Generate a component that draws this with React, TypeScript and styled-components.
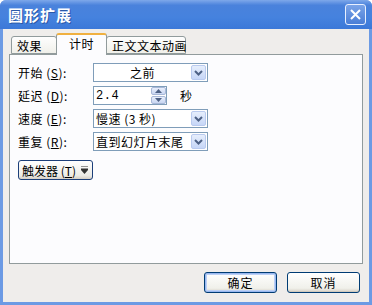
import styled, { createGlobalStyle } from "styled-components";

const Global = createGlobalStyle`
  html, body { margin: 0; padding: 0; background: #fff; }
  body { font-family: "Noto Sans CJK SC", "Liberation Sans", sans-serif; font-size: 12px; color: #000; }
`;

const Window = styled.div`
  width: 372px;
  height: 305px;
  box-sizing: border-box;
  display: flex;
  flex-direction: column;
  background: #6c9ae4;
  padding: 0 3px 3px 3px;
  border-radius: 6px 6px 0 0;
`;

const TitleBar = styled.div`
  height: 29px;
  margin: 0 -3px;
  padding: 0 6px 0 8px;
  display: flex;
  align-items: center;
  justify-content: space-between;
  border-radius: 6px 6px 0 0;
  background: linear-gradient(#7ea8ea 0%, #4a82dc 18%, #4582de 60%, #3b78d8 100%);
`;

const Title = styled.span`
  color: #fff;
  font-weight: bold;
  font-size: 15px;
  letter-spacing: 1px;
  text-shadow: 1px 1px 0 #2a58a8;
`;

const CloseButton = styled.div`
  width: 19px;
  height: 19px;
  border: 1px solid #e8f0ff;
  border-radius: 3px;
  background: linear-gradient(#7ba4e8, #4a7ed6);
  display: flex;
  align-items: center;
  justify-content: center;
`;

const Body = styled.div`
  flex: 1;
  background: #efedeb;
  padding: 4px 6px 0 6px;
  display: flex;
  flex-direction: column;
`;

const TabStrip = styled.div`
  display: flex;
  align-items: flex-end;
  height: 21px;
  padding-left: 2px;
  position: relative;
  z-index: 1;
`;

const Tab = styled.div<{ $active?: boolean; $w: number }>`
  width: ${(p) => p.$w}px;
  box-sizing: border-box;
  height: ${(p) => (p.$active ? 22 : 18)}px;
  margin-bottom: ${(p) => (p.$active ? -1 : 0)}px;
  border: 1px solid #919b9c;
  border-bottom: ${(p) => (p.$active ? "none" : "1px solid #919b9c")};
  border-top: ${(p) => (p.$active ? "2px solid #f0b040" : "1px solid #919b9c")};
  border-radius: 3px 3px 0 0;
  background: ${(p) => (p.$active ? "#fcfcfe" : "linear-gradient(#fefefe, #f0f0ea)")};
  display: flex;
  align-items: center;
  justify-content: ${(p) => (p.$active ? "center" : "flex-start")};
  padding: ${(p) => (p.$active ? "0 0 3px 0" : "0 0 0 5px")};
  font-size: 12px;
  letter-spacing: 0.5px;
  white-space: nowrap;
  & + & { margin-left: -1px; }
`;

const Panel = styled.div`
  height: 210px;
  box-sizing: border-box;
  border: 1px solid #919b9c;
  background: #fcfcfe;
  padding: 8px 8px 0 8px;
  display: flex;
  flex-direction: column;
  gap: 4px;
`;

const Row = styled.div`
  display: flex;
  align-items: center;
  height: 19px;
`;

const Label = styled.div`
  width: 75px;
  font-size: 12px;
  letter-spacing: 0.5px;
  white-space: pre;
  u { text-decoration: underline; }
`;

const Field = styled.div<{ $w: number }>`
  width: ${(p) => p.$w}px;
  height: 19px;
  box-sizing: border-box;
  border: 1px solid #7f9db9;
  background: #fff;
  display: flex;
  align-items: center;
`;

const FieldText = styled.div<{ $center?: boolean; $mono?: boolean }>`
  flex: 1;
  padding-left: ${(p) => (p.$center ? 0 : 2)}px;
  text-align: ${(p) => (p.$center ? "center" : "left")};
  font-family: ${(p) => (p.$mono ? '"Liberation Mono", "Noto Sans CJK SC", monospace' : 'inherit')};
  font-size: 12px;
  letter-spacing: 0.5px;
  white-space: pre;
  overflow: hidden;
`;

const DropButton = styled.div`
  width: 15px;
  height: 15px;
  margin-right: 1px;
  border: 1px solid #b9caef;
  border-radius: 2px;
  box-sizing: border-box;
  background: linear-gradient(#e6eefc, #c6d6f7);
  display: flex;
  align-items: center;
  justify-content: center;
`;

const Spinner = styled.div`
  width: 15px;
  height: 17px;
  display: flex;
  flex-direction: column;
  gap: 1px;
`;

const SpinHalf = styled.div`
  flex: 1;
  border: 1px solid #a8b8d8;
  border-radius: 2px;
  background: linear-gradient(#e9effc, #c8d6f2);
  display: flex;
  align-items: center;
  justify-content: center;
`;

const Unit = styled.span`
  margin-left: 13px;
  font-size: 12px;
`;

const TriggerButton = styled.div`
  margin-top: 5px;
  width: 75px;
  height: 20px;
  box-sizing: border-box;
  border: 1px solid #1c3f7a;
  border-radius: 3px;
  background: linear-gradient(#ffffff, #ecebe6 80%, #d6d0c5);
  display: flex;
  align-items: center;
  padding-left: 3px;
  gap: 5px;
  font-size: 12px;
  white-space: pre;
`;

const Footer = styled.div`
  display: flex;
  justify-content: flex-end;
  gap: 10px;
  padding: 8px 3px 0 0;
`;

const Button = styled.div<{ $default?: boolean }>`
  width: 73px;
  height: 21px;
  box-sizing: border-box;
  border: 1px solid #003c74;
  border-radius: 3px;
  background: linear-gradient(#ffffff, #f0f0ea 80%, #d6d0c5);
  box-shadow: ${(p) => (p.$default ? "inset 0 0 0 1px #99b8f0, inset 0 0 0 2px #bcd0f5" : "inset 0 -1px 0 #d0cabe")};
  display: flex;
  align-items: center;
  justify-content: center;
  font-size: 12px;
  letter-spacing: 1px;
`;

const Chevron = () => (
  <svg width="9" height="6" viewBox="0 0 9 6">
    <path d="M1 1 L4.5 4.5 L8 1" fill="none" stroke="#4d6185" strokeWidth="2" />
  </svg>
);

const Arrow = ({ up }: { up?: boolean }) => (
  <svg width="7" height="4" viewBox="0 0 7 4">
    <path d={up ? "M0 4 L3.5 0 L7 4 Z" : "M0 0 L3.5 4 L7 0 Z"} fill="#4d6185" />
  </svg>
);

const Select = ({ w, text, center }: { w: number; text: string; center?: boolean }) => (
  <Field $w={w}>
    <FieldText $center={center}>{text}</FieldText>
    <DropButton>
      <Chevron />
    </DropButton>
  </Field>
);

export default function App() {
  return (
    <>
      <Global />
      <Window>
        <TitleBar>
          <Title>圆形扩展</Title>
          <CloseButton>
            <svg width="11" height="11" viewBox="0 0 11 11">
              <path d="M1 1 L10 10 M10 1 L1 10" stroke="#fff" strokeWidth="2" />
            </svg>
          </CloseButton>
        </TitleBar>
        <Body>
          <TabStrip>
            <Tab $w={46}>效果</Tab>
            <Tab $w={51} $active>计时</Tab>
            <Tab $w={80}>正文文本动画</Tab>
          </TabStrip>
          <Panel>
            <Row>
              <Label>开始 (<u>S</u>):</Label>
              <Select w={115} text="之前" center />
            </Row>
            <Row>
              <Label>延迟 (<u>D</u>):</Label>
              <Field $w={74}>
                <FieldText $mono>2.4</FieldText>
                <Spinner>
                  <SpinHalf><Arrow up /></SpinHalf>
                  <SpinHalf><Arrow /></SpinHalf>
                </Spinner>
              </Field>
              <Unit>秒</Unit>
            </Row>
            <Row>
              <Label>速度 (<u>E</u>):</Label>
              <Select w={115} text="慢速 (3 秒)" />
            </Row>
            <Row>
              <Label>重复 (<u>R</u>):</Label>
              <Select w={115} text="直到幻灯片末尾" />
            </Row>
            <TriggerButton>
              <span>触发器 (<u>T</u>)</span>
              <svg width="7" height="8" viewBox="0 0 7 8">
                <path d="M0 0 H7 M0 3 L3.5 7 L7 3 Z" stroke="#333" fill="#333" strokeWidth="1.2" />
              </svg>
            </TriggerButton>
          </Panel>
          <Footer>
            <Button $default>确定</Button>
            <Button>取消</Button>
          </Footer>
        </Body>
      </Window>
    </>
  );
}
